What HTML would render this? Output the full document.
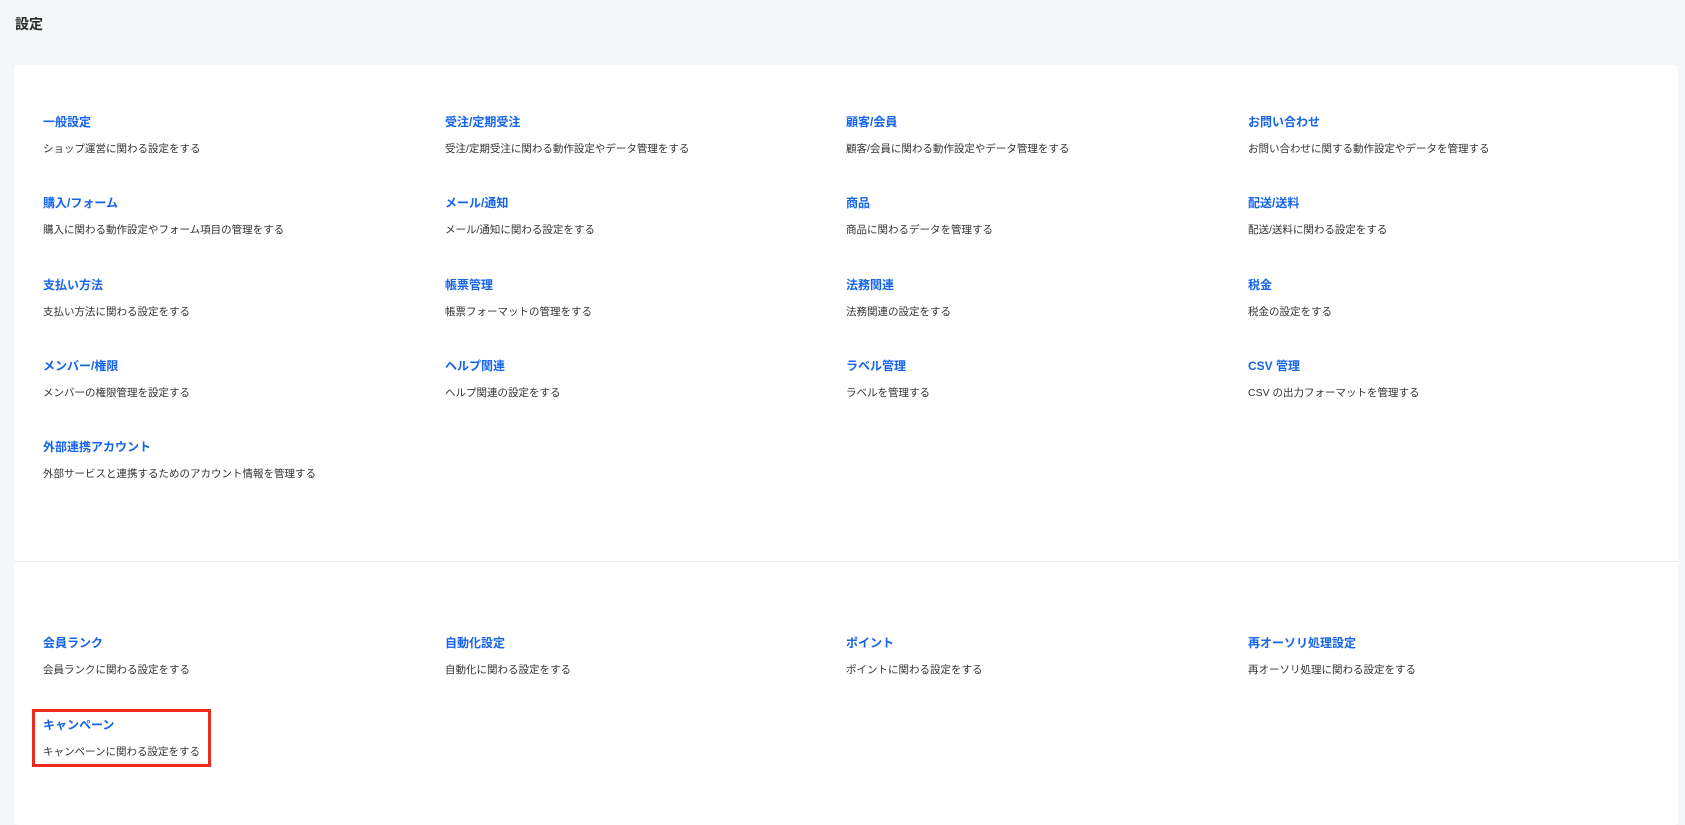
<!DOCTYPE html>
<html><head><meta charset="utf-8"><style>
*{margin:0;padding:0;box-sizing:border-box}
body{width:1685px;height:775px;overflow:hidden;background:#f4f7f8;font-family:"Liberation Sans","Noto Sans CJK JP",sans-serif;position:relative}
h1{position:absolute;left:15px;top:14px;font-size:14px;font-weight:bold;color:#2b2b2b;line-height:20px}
.card{position:absolute;left:14px;top:65px;width:1664px;height:760px;background:#fff;border-radius:4px}
.hr{position:absolute;left:14px;top:561px;width:1664px;height:1px;background:#e6e8ea}
.it{position:absolute}
.t{font-size:12px;font-weight:bold;color:#1664ea;line-height:16px;white-space:nowrap}
.d{font-size:10.5px;color:#333;line-height:14px;margin-top:12px;white-space:nowrap}
.red{position:absolute;left:32px;top:709px;width:179px;height:58px;border:3px solid #f0291d}
</style></head><body>
<h1>設定</h1>
<div class="card"></div>
<div class="hr"></div>
<div class="it" style="left:43px;top:114px"><div class="t">一般設定</div><div class="d">ショップ運営に関わる設定をする</div></div>
<div class="it" style="left:445px;top:114px"><div class="t">受注/定期受注</div><div class="d">受注/定期受注に関わる動作設定やデータ管理をする</div></div>
<div class="it" style="left:846px;top:114px"><div class="t">顧客/会員</div><div class="d">顧客/会員に関わる動作設定やデータ管理をする</div></div>
<div class="it" style="left:1248px;top:114px"><div class="t">お問い合わせ</div><div class="d">お問い合わせに関する動作設定やデータを管理する</div></div>

<div class="it" style="left:43px;top:195px"><div class="t">購入/フォーム</div><div class="d">購入に関わる動作設定やフォーム項目の管理をする</div></div>
<div class="it" style="left:445px;top:195px"><div class="t">メール/通知</div><div class="d">メール/通知に関わる設定をする</div></div>
<div class="it" style="left:846px;top:195px"><div class="t">商品</div><div class="d">商品に関わるデータを管理する</div></div>
<div class="it" style="left:1248px;top:195px"><div class="t">配送/送料</div><div class="d">配送/送料に関わる設定をする</div></div>

<div class="it" style="left:43px;top:277px"><div class="t">支払い方法</div><div class="d">支払い方法に関わる設定をする</div></div>
<div class="it" style="left:445px;top:277px"><div class="t">帳票管理</div><div class="d">帳票フォーマットの管理をする</div></div>
<div class="it" style="left:846px;top:277px"><div class="t">法務関連</div><div class="d">法務関連の設定をする</div></div>
<div class="it" style="left:1248px;top:277px"><div class="t">税金</div><div class="d">税金の設定をする</div></div>

<div class="it" style="left:43px;top:358px"><div class="t">メンバー/権限</div><div class="d">メンバーの権限管理を設定する</div></div>
<div class="it" style="left:445px;top:358px"><div class="t">ヘルプ関連</div><div class="d">ヘルプ関連の設定をする</div></div>
<div class="it" style="left:846px;top:358px"><div class="t">ラベル管理</div><div class="d">ラベルを管理する</div></div>
<div class="it" style="left:1248px;top:358px"><div class="t">CSV 管理</div><div class="d">CSV の出力フォーマットを管理する</div></div>

<div class="it" style="left:43px;top:439px"><div class="t">外部連携アカウント</div><div class="d">外部サービスと連携するためのアカウント情報を管理する</div></div>

<div class="it" style="left:43px;top:635px"><div class="t">会員ランク</div><div class="d">会員ランクに関わる設定をする</div></div>
<div class="it" style="left:445px;top:635px"><div class="t">自動化設定</div><div class="d">自動化に関わる設定をする</div></div>
<div class="it" style="left:846px;top:635px"><div class="t">ポイント</div><div class="d">ポイントに関わる設定をする</div></div>
<div class="it" style="left:1248px;top:635px"><div class="t">再オーソリ処理設定</div><div class="d">再オーソリ処理に関わる設定をする</div></div>

<div class="it" style="left:43px;top:717px"><div class="t">キャンペーン</div><div class="d">キャンペーンに関わる設定をする</div></div>
<div class="red"></div>
</body></html>
